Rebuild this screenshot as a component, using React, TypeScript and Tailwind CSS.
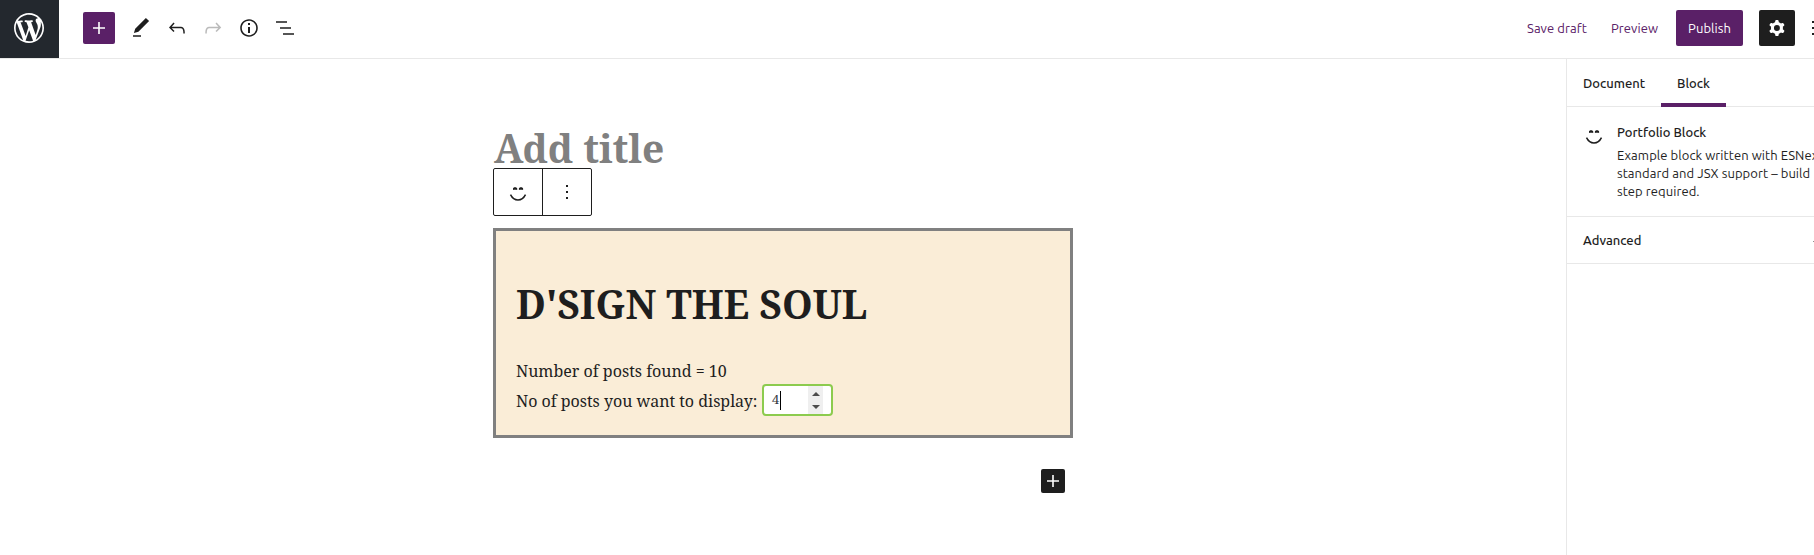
import type { ReactNode } from "react";

type IconProps = { children: ReactNode; className?: string; viewBox?: string };

function Icon({ children, className = "size-6", viewBox = "0 0 24 24" }: IconProps) {
  return (
    <svg viewBox={viewBox} className={`shrink-0 ${className}`} fill="currentColor" aria-hidden="true">
      {children}
    </svg>
  );
}

function Smile({ className = "size-6" }: { className?: string }) {
  return (
    <Icon className={className}>
      <path d="M7 10V8.600C7 7.800 7.800 7.200 9 7.200s2.200.6 2.200 1.400V10c-1.200-.2-3-.2-4.200 0zM12.900 10V8.600c0-.8.900-1.400 2.100-1.400s2.100.6 2.100 1.400V10c-1.200-.2-3-.2-4.200 0z" />
      <path d="M4.500 14.600C8 21.700 16 21.700 19.500 14.600" fill="none" stroke="currentColor" strokeWidth="1.500" />
    </Icon>
  );
}

function Plus({ className = "size-6" }: { className?: string }) {
  return (
    <Icon className={className}>
      <path d="M18 11.200h-5.200V6h-1.600v5.200H6v1.600h5.200V18h1.600v-5.200H18z" />
    </Icon>
  );
}

function Header() {
  return (
    <header className="flex h-[59px] shrink-0 items-start border-b border-[#e8e8e8] bg-white">
      <div className="flex h-[58px] w-[59px] shrink-0 items-center justify-center bg-[#23282e] pr-px pb-0.5 text-white">
        <Icon className="size-9" viewBox="-2 -2 24 24">
          <path d="M20 10c0-5.51-4.49-10-10-10C4.480 0 0 4.490 0 10c0 5.520 4.480 10 10 10 5.510 0 10-4.480 10-10zM7.780 15.370L4.370 6.220c.55-.02 1.170-.08 1.170-.08.5-.06.44-1.130-.06-1.110 0 0-1.450.11-2.370.11-.18 0-.37 0-.58-.01C4.120 2.690 6.870 1.110 10 1.110c2.330 0 4.450.87 6.050 2.340-.68-.11-1.650.39-1.650 1.580 0 .74.45 1.360.9 2.100.35.61.55 1.360.55 2.460 0 1.490-1.400 5-1.400 5l-3.030-8.370c.54-.02.82-.17.82-.17.5-.05.44-1.250-.06-1.220 0 0-1.440.12-2.380.12-.87 0-2.330-.12-2.330-.12-.5-.03-.56 1.200-.06 1.220l.92.08 1.260 3.410zM17.410 10c.24-.64.74-1.870.43-4.250.7 1.290 1.050 2.710 1.050 4.250 0 3.290-1.730 6.240-4.400 7.780.97-2.590 1.940-5.200 2.920-7.780zM6.100 18.090C3.120 16.650 1.110 13.530 1.110 10c0-1.300.23-2.480.72-3.590C3.250 10.300 4.670 14.200 6.100 18.090zm4.030-6.630l2.580 6.980c-.86.29-1.760.45-2.710.45-.79 0-1.570-.11-2.290-.33.81-2.380 1.620-4.740 2.420-7.100z" />
        </Icon>
      </div>
      <div className="flex h-14 items-center gap-3 pl-6 text-[#1e1e1e]">
        <button className="mr-0.5 flex size-8 items-center justify-center rounded-xs bg-[#5a2067] text-white">
          <Plus />
        </button>
        <Icon>
          <path d="M20.100 5.100L16.900 2 6.200 12.700l-1.300 4.400 4.500-1.300L20.100 5.100zM4 20.800h8v-1.500H4v1.500z" />
        </Icon>
        <Icon>
          <path d="M18.300 11.700c-.6-.6-1.400-.9-2.300-.9H6.700l2.900-3.300-1.100-1-4.500 5L8.500 16l1-1-2.700-2.700H16c.5 0 .9.2 1.300.5 1 1 1 3.400 1 4.500v.3h1.500v-.2c0-1.500 0-4.300-1.500-5.700z" />
        </Icon>
        <Icon className="size-6 opacity-30">
          <path d="M15.600 6.500l-1.100 1 2.900 3.300H8c-.9 0-1.700.3-2.300.9-1.400 1.500-1.400 4.200-1.400 5.600v.2h1.500v-.3c0-1.100 0-3.500 1-4.500.3-.3.7-.5 1.300-.5h9.200L14.500 15l1.100 1.100 4.600-4.600-4.600-5z" />
        </Icon>
        <Icon>
          <path d="M12 3.200c-4.800 0-8.800 3.900-8.800 8.800 0 4.800 3.900 8.800 8.800 8.800 4.800 0 8.800-3.900 8.800-8.800 0-4.800-4-8.800-8.800-8.800zm0 16c-4 0-7.200-3.300-7.200-7.200C4.800 8 8 4.800 12 4.800s7.200 3.300 7.200 7.200c0 4-3.200 7.200-7.200 7.200zM11 17h2v-6h-2v6zm0-8h2V7h-2v2z" />
        </Icon>
        <Icon>
          <path d="M3 5.200h11v1.600H3zM7 11.200h11v1.600H7zM10 17.200h11v1.600H10z" />
        </Icon>
      </div>
      <div className="ml-auto flex h-14 shrink-0 items-center text-[13px] tracking-[0.06px] text-[#5a2067]">
        <button className="w-[61px] whitespace-nowrap pt-0.5 text-left">Save draft</button>
        <button className="ml-[23px] w-[65px] pt-0.5 text-left">Preview</button>
        <button className="flex h-9 w-[67px] items-center justify-center rounded-xs bg-[#5a2067] pt-0.5 text-white">Publish</button>
        <button className="ml-4 flex size-9 items-center justify-center rounded-xs bg-[#1e1e1e] text-white">
          <Icon>
            <path fillRule="evenodd" d="M10.289 4.836A1 1 0 0111.275 4h1.306a1 1 0 01.987.836l.244 1.466c.787.26 1.503.679 2.108 1.218l1.393-.522a1 1 0 011.216.437l.653 1.130a1 1 0 01-.23 1.273l-1.148.944a6.025 6.025 0 010 2.435l1.149.946a1 1 0 01.23 1.272l-.653 1.130a1 1 0 01-1.216.437l-1.394-.522c-.605.54-1.320.958-2.108 1.218l-.244 1.466a1 1 0 01-.987.836h-1.306a1 1 0 01-.986-.836l-.244-1.466a5.995 5.995 0 01-2.108-1.218l-1.394.522a1 1 0 01-1.217-.436l-.653-1.131a1 1 0 01.23-1.272l1.149-.946a6.026 6.026 0 010-2.435l-1.148-.944a1 1 0 01-.23-1.272l.653-1.131a1 1 0 011.217-.437l1.393.522a5.994 5.994 0 012.108-1.218l.244-1.466zM14.929 12a3 3 0 11-6 0 3 3 0 016 0z" />
          </Icon>
        </button>
        <div className="flex w-[19px] flex-col items-end gap-1 text-[#1e1e1e]">
          <span className="h-0.5 w-0.5 bg-current" />
          <span className="h-0.5 w-0.5 bg-current" />
          <span className="h-0.5 w-0.5 bg-current" />
        </div>
      </div>
    </header>
  );
}

function Editor() {
  return (
    <main className="flex-1 bg-white pl-[493px] font-['Noto_Serif','DejaVu_Serif',serif] text-[#1e1e1e]">
      <div className="w-[580px]">
        <h1 className="h-[109px] pt-[59px] pl-px text-[39px] font-bold leading-[60px] tracking-[-0.05px] whitespace-nowrap text-[#808080]">Add title</h1>
        <div className="flex h-12 w-[99px] divide-x divide-[#1e1e1e] rounded-xs border border-[#1e1e1e] bg-white">
          <button className="flex flex-1 items-center justify-center">
            <Smile />
          </button>
          <button className="flex flex-1 items-center justify-center">
            <Icon>
              <path d="M11 5h2v2h-2zM11 11h2v2h-2zM11 17h2v2h-2z" />
            </Icon>
          </button>
        </div>
        <section className="mt-3 h-[210px] border-3 border-[#808080] bg-[#faedd7] px-5">
          <h2 className="pt-[43px] text-[39px] font-bold leading-[60px] whitespace-nowrap">D'SIGN THE SOUL</h2>
          <p className="mt-[22px] text-base leading-[30px] whitespace-nowrap">Number of posts found = 10</p>
          <div className="flex h-[30px] items-center text-base whitespace-nowrap">
            <label className="w-[246px] tracking-[-0.02px]">No of posts you want to display:</label>
            <div className="mb-0.5 flex h-8 w-[71px] items-center rounded border-2 border-[#8ccb4e] bg-white pl-2 text-[13px] text-[#32373c]">
              <span className="w-2">4</span>
              <span className="h-[19px] w-px bg-black" />
              <div className="mr-2 ml-auto flex h-7 w-[15px] flex-col items-center justify-center gap-[9px] bg-[#efefef] text-[#4c4c4c]">
                <Icon className="h-1 w-2" viewBox="0 0 8 4"><path d="M0 4L4 0l4 4z" /></Icon>
                <Icon className="h-1 w-2" viewBox="0 0 8 4"><path d="M0 0l4 4 4-4z" /></Icon>
              </div>
            </div>
          </div>
        </section>
        <div className="mt-[31px] flex justify-end pr-2">
          <button className="flex size-6 items-center justify-center rounded-xs bg-[#1e1e1e] text-white">
            <Plus />
          </button>
        </div>
      </div>
    </main>
  );
}

function Sidebar() {
  return (
    <aside className="w-[248px] shrink-0 overflow-hidden border-l border-[#e8e8e8] bg-white text-[13px] text-[#1e1e1e]">
      <div className="flex h-12 border-b border-[#e8e8e8] font-medium">
        <button className="h-12 w-[94px] pt-0.5 pl-4 text-left">Document</button>
        <button className="h-12 w-[65px] border-b-4 border-[#5a2067] pt-1.5 pl-4 text-left">Block</button>
      </div>
      <div className="flex h-[110px] border-b border-[#e8e8e8] pt-4 pl-[15px]">
        <Smile />
        <div className="ml-[11px] leading-[18px] whitespace-nowrap">
          <h3 className="mb-[5px] font-medium">Portfolio Block</h3>
          <div className="tracking-[0.07px]">
            <p>Example block written with ESNext</p>
            <p>standard and JSX support – build</p>
            <p>step required.</p>
          </div>
        </div>
      </div>
      <div className="flex h-[47px] items-center justify-between border-b border-[#e8e8e8] pt-0.5 pl-4 font-medium">
        <span>Advanced</span>
        <span className="h-px w-px bg-[#8e8e8e]" />
      </div>
    </aside>
  );
}

export default function App() {
  return (
    <div className="flex h-screen w-full flex-col overflow-hidden bg-white font-['Ubuntu','Open_Sans','Noto_Sans',sans-serif]">
      <Header />
      <div className="flex min-h-0 flex-1">
        <Editor />
        <Sidebar />
      </div>
    </div>
  );
}
